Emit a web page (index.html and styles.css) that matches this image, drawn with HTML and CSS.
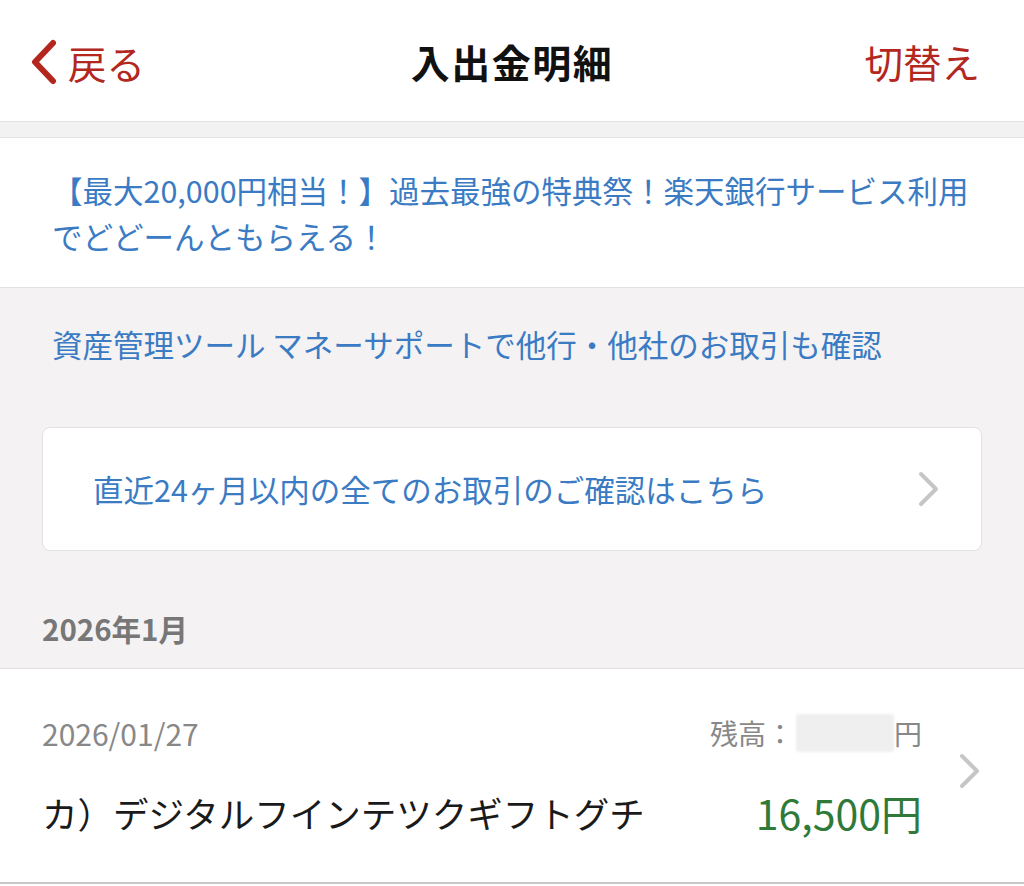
FILE: index.html
```html
<!DOCTYPE html>
<html lang="ja">
<head>
<meta charset="utf-8">
<title>入出金明細</title>
<link rel="stylesheet" href="styles.css">
</head>
<body>
<header class="nav">
  <div class="nav-left">
    <svg class="back-chev" width="30" height="46" viewBox="0 0 30 46"><path d="M25 4 L7 23 L25 42" fill="none" stroke="#b3271f" stroke-width="6" stroke-linecap="round" stroke-linejoin="round"/></svg>
    <span class="nav-link">戻る</span>
  </div>
  <h1 class="nav-title">入出金明細</h1>
  <div class="nav-right"><span class="nav-link">切替え</span></div>
</header>
<div class="band"></div>
<section class="banner">
  <p class="link-text">【最大20,000円相当！】過去最強の特典祭！楽天銀行サービス利用でどどーんともらえる！</p>
</section>
<section class="gray">
  <p class="link-text money">資産管理ツール マネーサポートで他行・他社のお取引も確認</p>
  <div class="card">
    <span class="link-text">直近24ヶ月以内の全てのお取引のご確認はこちら</span>
    <svg class="chev" width="24" height="36" viewBox="0 0 24 36"><path d="M4 3 L19 18 L4 33" fill="none" stroke="#c6c6c6" stroke-width="4" stroke-linecap="round" stroke-linejoin="round"/></svg>
  </div>
  <div class="month">2026年1月</div>
</section>
<section class="tx">
  <div class="tx-main">
    <div class="tx-row1">
      <span class="tx-date">2026/01/27</span>
      <span class="tx-bal">残高：<span class="blur"></span>円</span>
    </div>
    <div class="tx-row2">
      <span class="tx-name">カ）デジタルフインテツクギフトグチ</span>
      <span class="tx-amt">16,500円</span>
    </div>
  </div>
  <svg class="chev tx-chev" width="24" height="36" viewBox="0 0 24 36"><path d="M4 3 L19 18 L4 33" fill="none" stroke="#c6c6c6" stroke-width="4" stroke-linecap="round" stroke-linejoin="round"/></svg>
</section>
</body>
</html>
```
FILE: styles.css
```css
* { box-sizing: border-box; }
html, body { margin: 0; padding: 0; background: #ffffff; }
body {
  font-family: "Noto Sans CJK JP", "Noto Sans", sans-serif;
  width: 1024px;
  height: 886px;
  overflow: hidden;
}
p { margin: 0; }

.nav {
  height: 122px;
  display: grid;
  grid-template-columns: 1fr auto 1fr;
  align-items: center;
  padding: 0 44px;
  background: #fff;
  border-bottom: 1px solid #e4e2e3;
}
.nav-left { display: flex; align-items: center; gap: 10px; padding-top: 2px; margin-left: -16px; }
.nav-right { display: flex; justify-content: flex-end; }
.nav-link { color: #b3271f; font-size: 38.5px; line-height: 44px; }
.nav-title {
  margin: 0;
  font-size: 39px;
  font-weight: 700;
  color: #111;
  line-height: 44px;
  letter-spacing: 1.5px;
}
.band {
  height: 16px;
  background: #f3f2f3;
  border-bottom: 1px solid #e4e2e3;
}

.link-text { color: #3a7bc4; font-size: 30.5px; line-height: 46px; }

.banner {
  background: #fff;
  padding: 29px 52px 28px 52px;
  border-bottom: 1px solid #e2e0e1;
}

.gray {
  background: #f4f2f3;
  padding: 33px 42px 0 42px;
  border-bottom: 1px solid #e2e0e1;
}
.money { padding-left: 10px; }
.card {
  margin-top: 60px;
  height: 124px;
  background: #fff;
  border: 1px solid #e3e1e2;
  border-radius: 8px;
  display: flex;
  align-items: center;
  justify-content: space-between;
  padding: 0 40px 0 50px;
}
.chev { display: block; flex: none; }
.month {
  padding: 57px 0 20px 0;
  font-size: 29.5px;
  line-height: 40px;
  font-weight: 700;
  color: #777;
}

.tx {
  display: flex;
  align-items: center;
  padding: 0 42px 0 42px;
  height: 215px;
  border-bottom: 2px solid #c8c8c8;
}
.tx-main { flex: 1; padding-right: 36px; padding-bottom: 2px; }
.tx-row1, .tx-row2 { display: flex; justify-content: space-between; align-items: center; }
.tx-row1 { height: 40px; }
.tx-row2 { height: 48px; margin-top: 35px; }
.tx-date { font-size: 30px; color: #888; }
.tx-bal { font-size: 28px; color: #888; display: flex; align-items: center; }
.blur {
  display: inline-block;
  width: 98px;
  height: 38px;
  background: #efefef;
  border-radius: 3px;
  margin: 0 0 0 2px;
  filter: blur(1px);
}
.tx-name { font-size: 35.5px; color: #1a1a1a; }
.tx-amt { font-size: 41px; color: #2f7a38; }
.tx-chev { margin-top: -10px; }
```
